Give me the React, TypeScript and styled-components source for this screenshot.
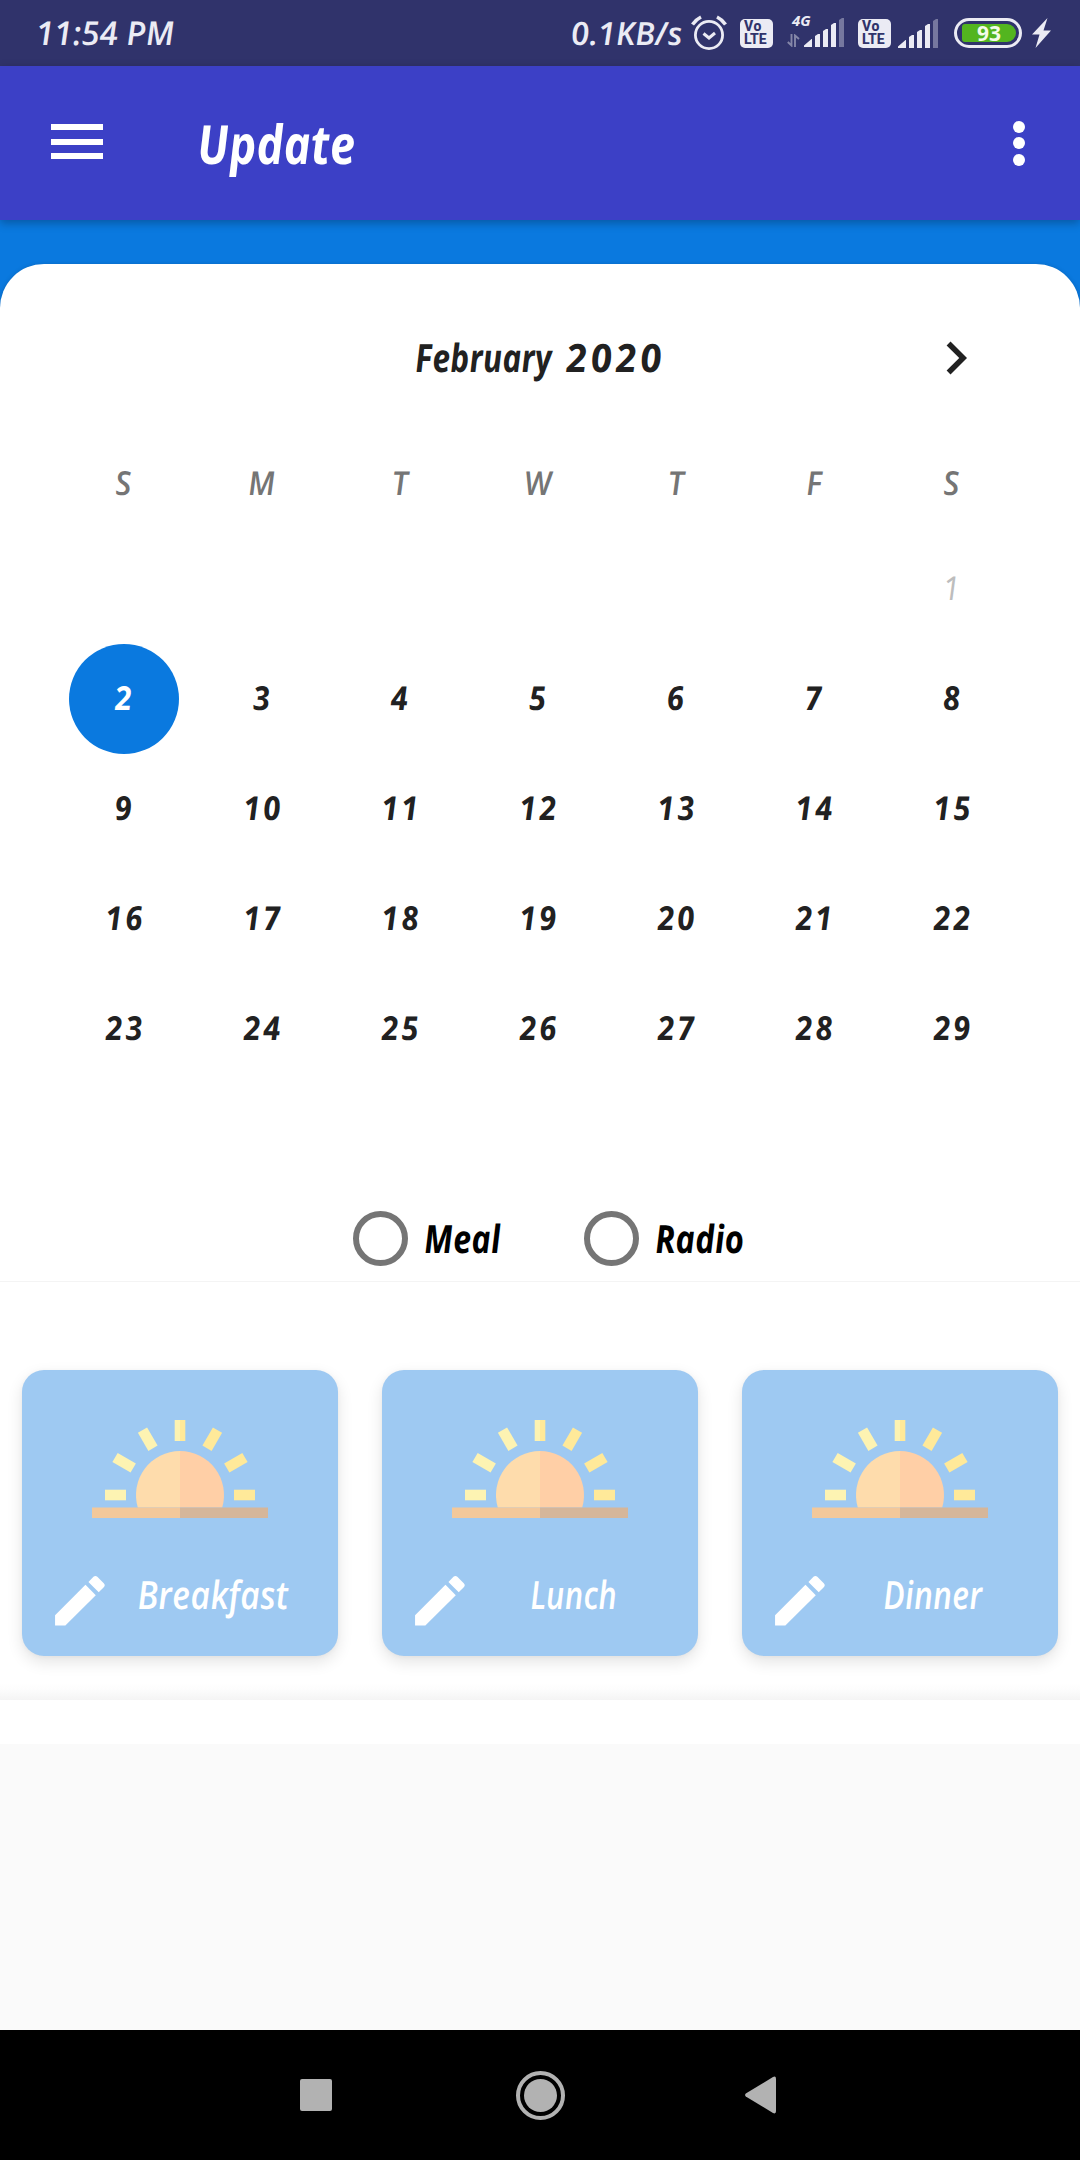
import React from "react";
import styled, { createGlobalStyle } from "styled-components";

const GlobalStyle = createGlobalStyle`
  * { box-sizing: border-box; }
  body { margin: 0; background: #fafafa; }
  svg { display: block; flex: none; }
`;

const Screen = styled.div`
  width: 1080px;
  height: 2160px;
  display: flex;
  flex-direction: column;
  background: #fafafa;
  font-family: "Open Sans", "Noto Sans", sans-serif;
  font-style: italic;
  overflow: hidden;
`;

/* Fixed-width slot holding hand-lettered style text, condensed by $scale. */
const Slot = styled.span<{ $width: number }>`
  display: block;
  flex: none;
  width: ${(p) => p.$width}px;
  white-space: nowrap;
`;

const Lettering = styled.span<{
  $size: number;
  $scale?: number;
  $weight?: number;
  $spacing?: number;
}>`
  display: inline-block;
  font-size: ${(p) => p.$size}px;
  font-weight: ${(p) => p.$weight ?? 600};
  letter-spacing: ${(p) => p.$spacing ?? 0}px;
  line-height: 1.2;
  transform: scaleX(${(p) => p.$scale ?? 1}) skewX(4deg);
  transform-origin: left center;
`;

const StatusBar = styled.header`
  height: 66px;
  flex: none;
  display: flex;
  align-items: center;
  padding: 0 29px 0 36px;
  background: #30336b;
  color: #ebebf4;
`;

const StatusIcons = styled.div`
  margin-left: auto;
  display: flex;
  align-items: center;
`;

const VolteBadge = styled.div<{ $left: number; $right: number }>`
  width: 33px;
  height: 29px;
  margin: 1px ${(p) => p.$right}px 0 ${(p) => p.$left}px;
  padding: 1px 0 0 4px;
  border-radius: 5px;
  background: #ebebf4;
  color: #30336b;
  font-family: Roboto, sans-serif;
  font-style: normal;
  font-weight: 800;
  display: flex;
  flex-direction: column;
`;

const VolteLine = styled.span<{ $spacing: number }>`
  font-size: 14px;
  line-height: 13px;
  letter-spacing: ${(p) => p.$spacing}px;
`;

const SignalGroup = styled.div`
  width: 57px;
  height: 66px;
  display: flex;
  flex-direction: column;
  padding: 13px 0 0 0;
`;

const NetworkType = styled.span`
  height: 5px;
  padding-left: 5px;
  font-size: 15px;
  line-height: 15px;
  font-weight: 700;
`;

const SignalRow = styled.div`
  display: flex;
  align-items: flex-end;
  gap: 4px;
`;

const Battery = styled.div`
  width: 68px;
  height: 30px;
  margin: 0 10px 0 15px;
  padding: 3px;
  border: 3px solid #ebebf4;
  border-radius: 15px;
  display: flex;
`;

const BatteryLevel = styled.div`
  width: 54px;
  margin-left: 2px;
  border-radius: 3px 9px 9px 3px;
  background: #53b51f;
  color: #f4fbe9;
  text-align: center;
  font: normal 700 21px/18px "Open Sans", sans-serif;
`;

const AppBar = styled.div`
  height: 154px;
  flex: none;
  display: flex;
  align-items: center;
  padding: 0 55px 0 51px;
  background: #3c40c6;
  color: #fff;
  z-index: 1;
  box-shadow: 0 3px 9px rgba(0, 0, 0, 0.28);
`;

const MenuButton = styled.button`
  width: 52px;
  height: 35px;
  margin: 0 94px 3px 0;
  padding: 0;
  border: 0;
  background: none;
  display: flex;
  flex-direction: column;
  justify-content: space-between;
`;

const MenuLine = styled.span`
  height: 6px;
  background: #fff;
`;

const MoreButton = styled.button`
  width: 12px;
  height: 45px;
  margin: 0 0 0 auto;
  padding: 0;
  border: 0;
  background: none;
  display: flex;
  flex-direction: column;
  justify-content: space-between;
`;

const Dot = styled.span`
  width: 12px;
  height: 12px;
  border-radius: 50%;
  background: #fff;
`;

const Main = styled.main`
  height: 1524px;
  flex: none;
  display: flex;
  flex-direction: column;
  padding-top: 44px;
  background: linear-gradient(#0a79df 120px, #fff 120px);
`;

const CalendarCard = styled.section`
  height: 1018px;
  flex: none;
  display: flex;
  flex-direction: column;
  border-radius: 44px 44px 0 0;
  background: #fff;
  box-shadow: 0 1px 5px rgba(0, 0, 0, 0.2);
  border-bottom: 1px solid #f4f4f4;
`;

const MonthBar = styled.div`
  height: 172px;
  display: flex;
  align-items: flex-start;
  padding: 61px 91px 0 415px;
  color: #212121;
`;

const MonthTitle = styled.div`
  display: flex;
  margin-top: 9px;
  width: 508px;
`;

const Grid = styled.div`
  display: grid;
  grid-template-columns: repeat(7, 138px);
  padding: 0 59px 0 55px;
`;

const Weekday = styled.div`
  height: 98px;
  padding-top: 27px;
  text-align: center;
  color: #757575;
`;

const Day = styled.div<{ $tone: string; $selected?: boolean }>`
  width: 110px;
  height: 110px;
  justify-self: center;
  display: flex;
  align-items: center;
  justify-content: center;
  border-radius: 50%;
  color: ${(p) => p.$tone};
  background: ${(p) => (p.$selected ? "#0a79df" : "transparent")};
`;

const DayNumber = styled.span<{ $weight: number }>`
  font-size: 33px;
  line-height: 1;
  font-weight: ${(p) => p.$weight};
  letter-spacing: 3px;
  margin-right: -2px;
  margin-top: -4px;
  transform: scaleX(0.93) skewX(4deg);
`;

const RadioRow = styled.div`
  display: flex;
  align-items: center;
  height: 56px;
  margin-top: 126px;
  padding-left: 353px;
  color: #000;
`;

const RadioCircle = styled.span`
  width: 55px;
  height: 55px;
  flex: none;
  margin-right: 16px;
  border: 6px solid #757575;
  border-radius: 50%;
`;

const MealSection = styled.section`
  height: 418px;
  flex: none;
  display: flex;
  gap: 44px;
  padding: 88px 22px 0;
  background: linear-gradient(#fff 401px, #fdfdfd 407px, #f4f4f4 418px);
`;

const MealCard = styled.article`
  width: 316px;
  height: 286px;
  border-radius: 22px;
  background: #9ec9f2;
  color: #fff;
  box-shadow: 0 6px 16px rgba(0, 0, 0, 0.11), 0 1px 5px rgba(0, 0, 0, 0.04);
`;

const SunHolder = styled.div`
  display: flex;
  justify-content: center;
  padding-top: 50px;
`;

const MealCaption = styled.div<{ $indent: number }>`
  display: flex;
  align-items: flex-start;
  padding: 53px 0 0 31px;
  gap: ${(p) => p.$indent}px;

  svg { margin-top: 3px; }
`;

const NavBar = styled.nav`
  height: 130px;
  flex: none;
  margin-top: auto;
  display: flex;
  align-items: center;
  justify-content: space-between;
  padding: 0 304px 0 300px;
  background: #000;
`;

const RecentButton = styled.span`
  width: 32px;
  height: 32px;
  border-radius: 2px;
  background: #b2b2b2;
`;

const HomeButton = styled.span`
  width: 49px;
  height: 49px;
  margin-left: 4px;
  padding: 4px;
  border: 4px solid #b2b2b2;
  border-radius: 50%;
  background: #b2b2b2 content-box;
`;

const AlarmIcon = () => (
  <svg width="36" height="36" viewBox="0 0 36 36" fill="none" stroke="#ebebf4">
    <circle cx="18" cy="20" r="13.6" strokeWidth="2.8" />
    <path d="M12.500 18.500l5.500 4.500 6-5" strokeWidth="3" />
    <path d="M1.500 9.500C4 6 6.500 3.700 10 2M34.500 9.500C32 6 29.500 3.700 26 2" strokeWidth="3.6" />
  </svg>
);

const SignalBars = () => (
  <svg width="41" height="29" viewBox="0 0 41 29" fill="#ebebf4">
    <path d="M0 29v-1.500L7.500 21H8v8zM11 18l3-2h2v13h-5zM19 13l3-2h2v18h-5zM27 7l3-2h2v24h-5z" />
    <path d="M35 2l3-2h2v29h-5z" opacity=".38" />
  </svg>
);

const DataArrows = () => (
  <svg width="13" height="13" viewBox="0 0 13 13" fill="none" stroke="#8587a8" strokeWidth="1.900">
    <path d="M4.500 0v11.500L0.800 8M8 13V1.500L12 5" />
  </svg>
);

const Bolt = () => (
  <svg width="19" height="30" viewBox="0 0 19 30" fill="#ebebf4">
    <path d="M15.500 0L0 16.500h7.500L3.500 30 19 12.500h-7.500z" />
  </svg>
);

const Chevron = () => (
  <svg width="66" height="66" viewBox="0 0 24 24" fill="#212121">
    <path d="M10 6L8.590 7.410 13.170 12l-4.580 4.590L10 18l6-6z" />
  </svg>
);

const Pencil = () => (
  <svg width="60" height="60" viewBox="2.250 2.250 21.818 21.818" fill="#fff">
    <path d="M3 17.250V21h3.750L17.810 9.940l-3.750-3.750L3 17.250zM20.710 7.040a.996.996 0 0 0 0-1.410l-2.340-2.340a.996.996 0 0 0-1.410 0l-1.830 1.830 3.750 3.750 1.830-1.830z" />
  </svg>
);

const Sunrise = () => (
  <svg width="176" height="98" viewBox="-88 -75 176 98">
    <path d="M0-44A44 44 0 0 0-42.200 12.500H0z" fill="#fedcac" />
    <path d="M0-44A44 44 0 0 1 42.200 12.500H0z" fill="#ffcfa6" />
    <path d="M-88 12.500H0V23h-88z" fill="#f3c89a" />
    <path d="M0 12.500h88V23H0z" fill="#d5b69a" />
    {[-90, -60, -30].map((a) => (
      <rect key={a} x="-5.300" y="-75" width="10.600" height="21" fill="#fdf3b2" transform={`rotate(${a})`} />
    ))}
    <path d="M-5.300-75H0v21h-5.300z" fill="#fdf3b2" />
    <path d="M0-75h5.300v21H0z" fill="#ffe999" />
    {[30, 60, 90].map((a) => (
      <rect key={a} x="-5.300" y="-75" width="10.600" height="21" fill="#ffe999" transform={`rotate(${a})`} />
    ))}
  </svg>
);

const BackIcon = () => (
  <svg width="31" height="38" viewBox="0 0 31 38" fill="#b2b2b2">
    <path d="M.8 17.500L28 1q3-1.500 3 2v32q0 3.500-3 2L.8 20.500q-1.500-1.500 0-3z" />
  </svg>
);

const Volte = ({ left, right }: { left: number; right: number }) => (
  <VolteBadge $left={left} $right={right}>
    <VolteLine $spacing={0.5}>Vo</VolteLine>
    <VolteLine $spacing={0}>LTE</VolteLine>
  </VolteBadge>
);

const weekdays = ["S", "M", "T", "W", "T", "F", "S"];
const days = Array.from({ length: 29 }, (_, i) => i + 1);
const meals = [
  { name: "Breakfast", indent: 24, width: 150, scale: 0.88 },
  { name: "Lunch", indent: 57, width: 86, scale: 0.81 },
  { name: "Dinner", indent: 50, width: 101, scale: 0.83 },
];

export default function App() {
  return (
    <Screen>
      <GlobalStyle />
      <StatusBar>
        <Lettering $size={33} $scale={1}>11:54 PM</Lettering>
        <StatusIcons>
          <Slot $width={120}>
            <Lettering $size={32} $scale={1.02}>0.1KB/s</Lettering>
          </Slot>
          <AlarmIcon />
          <Volte left={13} right={14} />
          <SignalGroup>
            <NetworkType>4G</NetworkType>
            <SignalRow><DataArrows /><SignalBars /></SignalRow>
          </SignalGroup>
          <Volte left={14} right={7} />
          <SignalBars />
          <Battery><BatteryLevel>93</BatteryLevel></Battery>
          <Bolt />
        </StatusIcons>
      </StatusBar>
      <AppBar>
        <MenuButton aria-label="Menu"><MenuLine /><MenuLine /><MenuLine /></MenuButton>
        <Lettering $size={54} $scale={0.85} $weight={700}>Update</Lettering>
        <MoreButton aria-label="More"><Dot /><Dot /><Dot /></MoreButton>
      </AppBar>
      <Main>
        <CalendarCard>
          <MonthBar>
            <MonthTitle>
              <Slot $width={151}>
                <Lettering $size={39} $scale={0.825} $weight={700}>February</Lettering>
              </Slot>
              <Lettering $size={39} $scale={0.97} $weight={700} $spacing={4}>2020</Lettering>
            </MonthTitle>
            <Chevron />
          </MonthBar>
          <Grid>
            {weekdays.map((d, i) => (
              <Weekday key={i}><Lettering $size={33} $scale={0.95} $weight={600}>{d}</Lettering></Weekday>
            ))}
            {Array.from({ length: 6 }, (_, i) => <span key={`blank${i}`} />)}
            {days.map((d) => (
              <Day key={d} $selected={d === 2} $tone={d === 1 ? "#bdbdbd" : d === 2 ? "#fff" : "#212121"}>
                <DayNumber $weight={d === 1 ? 500 : 700}>{d}</DayNumber>
              </Day>
            ))}
          </Grid>
          <RadioRow>
            <RadioCircle />
            <Slot $width={160}>
              <Lettering $size={39} $scale={0.84} $weight={700}>Meal</Lettering>
            </Slot>
            <RadioCircle />
            <Lettering $size={39} $scale={0.85} $weight={700}>Radio</Lettering>
          </RadioRow>
        </CalendarCard>
        <MealSection>
          {meals.map((m) => (
            <MealCard key={m.name}>
              <SunHolder><Sunrise /></SunHolder>
              <MealCaption $indent={m.indent}>
                <Pencil />
                <Slot $width={m.width}>
                  <Lettering $size={39} $scale={m.scale} $weight={600}>{m.name}</Lettering>
                </Slot>
              </MealCaption>
            </MealCard>
          ))}
        </MealSection>
      </Main>
      <NavBar>
        <RecentButton />
        <HomeButton />
        <BackIcon />
      </NavBar>
    </Screen>
  );
}
